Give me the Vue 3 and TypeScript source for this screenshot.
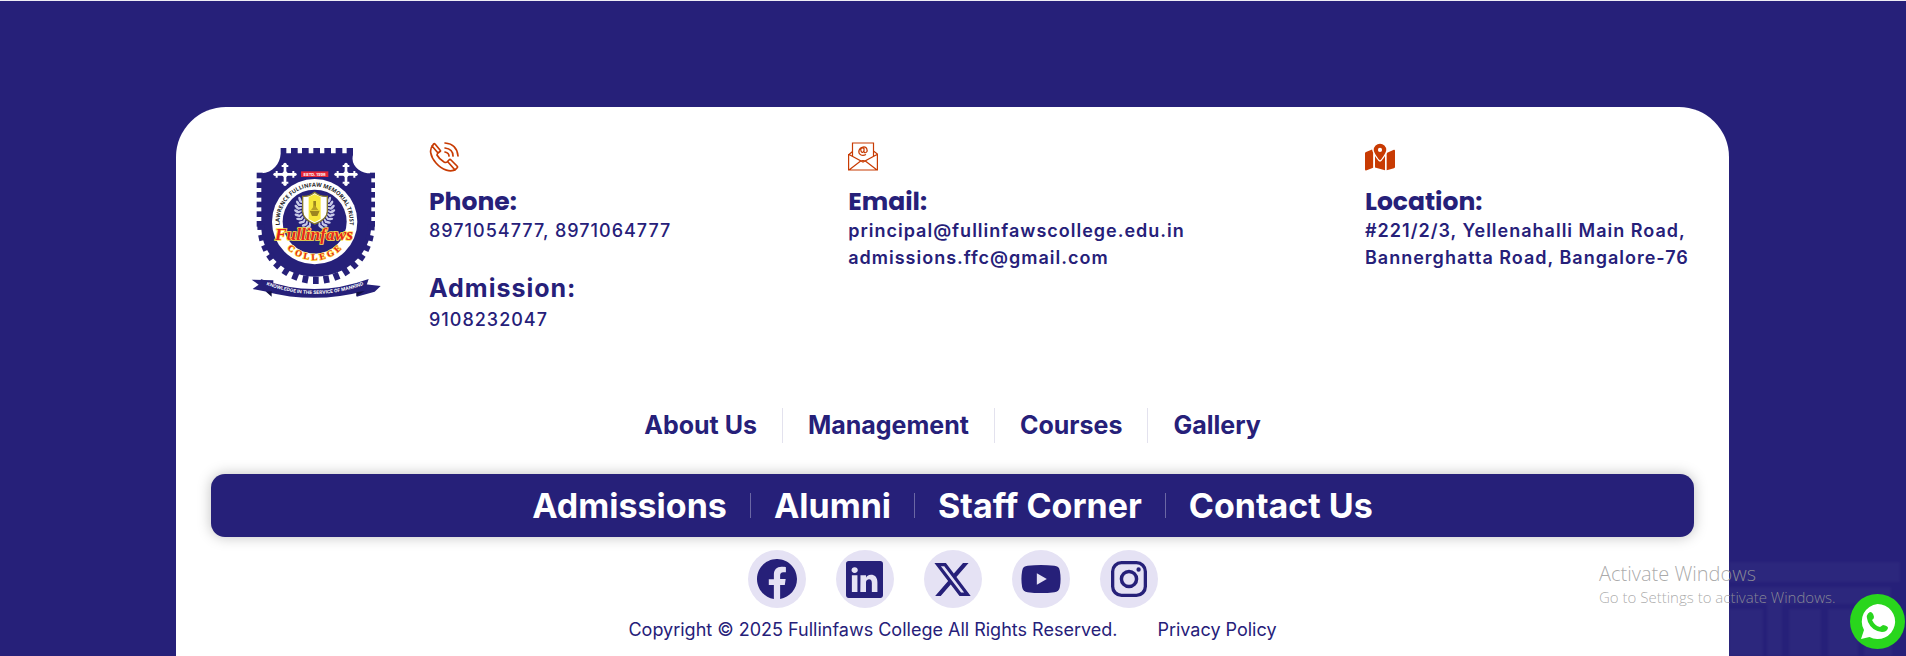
<script setup lang="ts">
interface LinkItem { label: string; href: string }

const links: LinkItem[] = [
  { label: 'About Us', href: '#about' },
  { label: 'Management', href: '#management' },
  { label: 'Courses', href: '#courses' },
  { label: 'Gallery', href: '#gallery' },
]
const featured: LinkItem[] = [
  { label: 'Admissions', href: '#admissions' },
  { label: 'Alumni', href: '#alumni' },
  { label: 'Staff Corner', href: '#staff' },
  { label: 'Contact Us', href: '#contact' },
]
const social = [
  { name: 'Facebook', d: 'M16 8.049c0-4.446-3.582-8.05-8-8.05C3.58 0-.002 3.603-.002 8.05c0 4.017 2.926 7.347 6.75 7.951v-5.625h-2.03V8.05H6.75V6.275c0-2.017 1.195-3.131 3.022-3.131.876 0 1.791.157 1.791.157v1.98h-1.009c-.993 0-1.303.621-1.303 1.258v1.51h2.218l-.354 2.326H9.25V16c3.824-.604 6.75-3.934 6.75-7.951z', box: '0 0 16 16', size: 40 },
  { name: 'LinkedIn', d: 'M0 1.146C0 .513.526 0 1.175 0h13.65C15.474 0 16 .513 16 1.146v13.708c0 .633-.526 1.146-1.175 1.146H1.175C.526 16 0 15.487 0 14.854V1.146zm4.943 12.248V6.169H2.542v7.225h2.401zm-1.2-8.212c.837 0 1.358-.554 1.358-1.248-.015-.709-.52-1.248-1.342-1.248-.822 0-1.359.54-1.359 1.248 0 .694.521 1.248 1.327 1.248h.016zm4.908 8.212V9.359c0-.216.016-.432.08-.586.173-.431.568-.878 1.232-.878.869 0 1.216.662 1.216 1.634v3.865h2.401V9.25c0-2.22-1.184-3.252-2.764-3.252-1.274 0-1.845.7-2.165 1.193v.025h-.016a5.54 5.54 0 0 1 .016-.025V6.169h-2.4c.03.678 0 7.225 0 7.225h2.4z', box: '0 0 16 16', size: 37 },
  { name: 'X', d: 'M18.244 2.25h3.308l-7.227 8.26 8.502 11.24H16.17l-5.214-6.817L4.99 21.75H1.68l7.73-8.835L1.254 2.25H8.08l4.713 6.231zm-1.161 17.52h1.833L7.084 4.126H5.117z', box: '1 2 22 20', size: 37 },
  { name: 'YouTube', d: 'M4 2.6Q12 1.6 20 2.6Q22.8 2.8 23.3 5.5Q24.2 10.5 23.3 15.5Q22.8 18.2 20 18.4Q12 19.4 4 18.4Q1.2 18.2.7 15.5Q-.2 10.5.7 5.5Q1.2 2.8 4 2.6zM9.5 7v7l6-3.5z', box: '0 0 24 21', size: 40 },
  { name: 'Instagram', d: 'M7 0h10a7 7 0 0 1 7 7v10a7 7 0 0 1-7 7H7a7 7 0 0 1-7-7V7a7 7 0 0 1 7-7zm0 2.2A4.8 4.8 0 0 0 2.2 7v10A4.8 4.8 0 0 0 7 21.8h10a4.8 4.8 0 0 0 4.8-4.8V7A4.8 4.8 0 0 0 17 2.2zM12 5.8a6.2 6.2 0 1 1 0 12.4 6.2 6.2 0 0 1 0-12.4zM12 8.1a3.9 3.9 0 1 0 0 7.8 3.9 3.9 0 0 0 0-7.8zM18.4 4.2a1.45 1.45 0 1 1 0 2.9 1.45 1.45 0 0 1 0-2.9z', box: '0 0 24 24', size: 36 },
]

// Crenellations round the lower edge of the crest
const teeth = Array.from({ length: 17 }, (_, i) => 2 + i * 11)
const leaves = Array.from({ length: 9 }, (_, i) => i)
</script>

<template>
  <footer class="page">
    <div class="card">
      <section class="contacts">
        <a class="logo" href="#home" aria-label="Fullinfaws College">
          <svg viewBox="0 0 450 510" aria-hidden="true">
            <defs>
              <path id="ring" d="M122 282A105 105 0 1 1 326 282" />
              <path id="lower" d="M122 310A114 114 0 0 0 328 304" />
              <path id="motto" d="M74 445Q225 503 376 445" />
            </defs>
            <g fill="#262079">
              <path d="M122 36h17v16h14V36h20v16h13V36h20v16h14V36h20v16h13V36h20v16h14V36h20v16h13V36h19v21C330 91 364 113 394 112v155C392 360 312 422 225 422S62 360 64 267V112C99 110 120 83 122 53z" />
              <path v-for="n in 6" :key="'l' + n" :d="`M50 ${81 + n * 29}h18v17h-18z`" />
              <path v-for="n in 6" :key="'r' + n" :d="`M390 ${81 + n * 29}h15v17h-15z`" />
              <rect v-for="a in teeth" :key="a" x="382" y="260" width="22" height="17" :transform="`rotate(${a} 228 268)`" />
            </g>
            <g v-for="x in [135, 318]" :key="x" :transform="`translate(${x} 115)`" fill="#fff">
              <path d="M-4-30h8v26h26v8H4v26h-8V4h-26v-8h26z" />
              <path d="M-10-28h20v6h-20zM-10 22h20v6h-20zM-28-10h6v20h-6zM22-10h6v20h-6zM0-12L12 0 0 12-12 0z" />
              <circle cy="-30" r="5" /><circle cy="30" r="5" /><circle cx="-30" r="5" /><circle cx="30" r="5" />
            </g>
            <rect x="183" y="106" width="82" height="17" fill="#e32537" />
            <text x="224" y="119" class="tiny" text-anchor="middle">ESTD. 1998</text>
            <circle cx="224" cy="257" r="128" fill="#fff" />
            <circle cx="224" cy="257" r="96" fill="#262079" />
            <text class="ringtext"><textPath href="#ring" startOffset="50%" text-anchor="middle">LAWRENCE FULLINFAW MEMORIAL TRUST</textPath></text>
            <g fill="#c8cae8">
              <g v-for="s in [-1, 1]" :key="s" :transform="`translate(224 222) scale(${s} 1)`">
                <g v-for="i in leaves" :key="i" :transform="`rotate(${-35 + i * 13})`">
                  <ellipse cx="54" cy="0" rx="9" ry="4" transform="rotate(-35 54 0)" />
                  <ellipse cx="45" cy="2" rx="7" ry="3" transform="rotate(25 45 2)" />
                </g>
              </g>
            </g>
            <path d="M188 181q20 2 36-12q16 14 38 12v45q0 24-38 38q-36-14-36-38z" fill="#fff" stroke="#887b2b" stroke-width="4" />
            <path d="M206 183l18-8 18 8v66l-18 10-18-10z" fill="#f7e73b" />
            <path d="M220 195h8v18h-8zM209 224h30l-7 16h-16z" fill="#9c8520" />
            <path d="M224 207l11 15h-22z" fill="#b69d26" />
            <text x="222" y="313" text-anchor="middle" class="script">Fullinfaws</text>
            <text class="college"><textPath href="#lower" startOffset="50%" text-anchor="middle">COLLEGE</textPath></text>
            <path d="M35 431l65 2v38l-62-12 18-13zM422 450l-18 17-54 15v-40z" fill="#262079" />
            <path d="M62 429Q223 489 386 429l-12 36Q225 505 78 467z" fill="#262079" />
            <path d="M78 467l17 15v-16zM374 465l-25 16v-12z" fill="#111044" />
            <text class="motto"><textPath href="#motto" startOffset="50%" text-anchor="middle">KNOWLEDGE IN THE SERVICE OF MANKIND</textPath></text>
          </svg>
        </a>
        <div class="columns">
          <div class="column">
            <svg class="icon" viewBox="0 0 30 30" fill="none" stroke="#c83b03" stroke-width="1.700" stroke-linejoin="round" stroke-linecap="round" aria-hidden="true">
              <path d="M4 3C0 7 1 14 7 21S22 31 27 27L28 26Q29 25 28 24L22 18Q21 17 20 18L18 20Q17 21 15 20Q10 17 8 13Q8 12 9 11L11 9.500Q12 9 11 8L6 2Q5 1 4 3M3 4l6 7M19 20l7 8M16 1q12 1 13 13M16 6q8 1 8 8M16 10q4 1 4 4" />
            </svg>
            <h2>Phone:</h2>
            <p>8971054777, 8971064777</p>
            <h3>Admission:</h3>
            <p>9108232047</p>
          </div>
          <div class="column email">
            <svg class="icon" viewBox="0 0 30 30" fill="none" stroke="#c83b03" stroke-width="1.200" aria-hidden="true">
              <path d="M1 12.500L4.500 9.500M.600 12v16h28.800V12l-3.900-3M1 12.500l14 7.500 14-7.500M1 28l11-8.500q3-2 6 0l11 8.500M4.500 14V1h21v13" />
              <path d="M18 12.500c-4 2-8 0-7-4s7-5 8-1c1 3-3 4.500-3 2V6.500c-2-1.500-4 0-3 2.500s3 1 3-1" />
            </svg>
            <h2>Email:</h2>
            <p>principal@fullinfawscollege.edu.in<br />admissions.ffc@gmail.com</p>
          </div>
          <div class="column location">
            <svg class="icon" viewBox="0 0 576 576" fill="#c83b03" aria-hidden="true">
              <path d="M408 152c0 45-69 145-100 184q-20 24-40 0C238 297 168 197 168 152a120 120 0 0 1 240 0zM288 112a40 40 0 1 0 0 80 40 40 0 0 0 0-80zM0 216q0-18 20-25l116-45q5 30 20 62v285L33 542q-33 11-33-20zM192 269c24 38 49 70 65 89q31 36 62 0c16-19 41-51 65-89v275l-192-55zM554 151q22-8 22 22v306q0 18-20 26l-140 37V231l10-26z" />
            </svg>
            <h2>Location:</h2>
            <p>#221/2/3, Yellenahalli Main Road,<br />Bannerghatta Road, Bangalore-76</p>
          </div>
        </div>
      </section>

      <nav class="links" aria-label="College">
        <a v-for="l in links" :key="l.label" :href="l.href">{{ l.label }}</a>
      </nav>
      <nav class="featured" aria-label="Featured">
        <a v-for="l in featured" :key="l.label" :href="l.href">{{ l.label }}</a>
      </nav>
      <div class="social">
        <a v-for="s in social" :key="s.name" href="#social" :aria-label="s.name">
          <svg :viewBox="s.box" :width="s.size" :height="s.size" fill="#262079" fill-rule="evenodd" aria-hidden="true"><path :d="s.d" /></svg>
        </a>
      </div>
      <div class="legal">
        <span>Copyright © 2025 Fullinfaws College All Rights Reserved.</span>
        <a href="#privacy">Privacy Policy</a>
      </div>
    </div>

    <svg class="skyline" viewBox="0 0 177 98" aria-hidden="true">
      <g fill="#fff" fill-opacity=".03">
        <path d="M0 4h171v20H0zM0 29h162v17H0zM0 51h34v47H0zM38 46h15v52H38zM60 51h32v47H60zM99 51h30v47H99zM135 51h28v47h-28z" />
      </g>
    </svg>
    <div class="watermark">
      <strong>Activate Windows</strong>
      <span>Go to Settings to activate Windows.</span>
    </div>
    <a class="whatsapp" href="#whatsapp" aria-label="WhatsApp">
      <svg viewBox="0 0 55 55" aria-hidden="true">
        <circle cx="27.500" cy="27.500" r="27.500" fill="#29d61d" />
        <path d="M27.500 10a17.500 17.500 0 1 1-8 33L11 45l3-9A17.500 17.500 0 0 1 27.500 10z" fill="#fff" />
        <path d="M20 18q3 0 4 5 0 2-2 3 3 6 8 7l3-2q5 1 5 3-1 4-6 4-10-1-14-10-3-8 2-10z" fill="#29d61d" />
      </svg>
    </a>
  </footer>
</template>

<style>
body { margin: 0; background: #262079; }
</style>

<style scoped>
.page {
  position: relative;
  box-sizing: border-box;
  min-height: 100vh;
  padding: 106px 177px 0 176px;
  border-top: 1px solid #eeedf5;
  background: #262079;
  color: #262079;
  font-family: Inter, "Liberation Sans", sans-serif;
  overflow: hidden;
}
a { color: inherit; text-decoration: none; }
svg { display: block; }
.card {
  padding: 35px 35px 13px;
  border-radius: 50px 50px 0 0;
  background: #fff;
}
.contacts { display: flex; min-height: 232px; }
.logo { flex: none; width: 150px; margin: -6px 39px 0 29px; }
.columns { flex: 1; display: flex; justify-content: space-between; }
.icon { width: 30px; height: 30px; margin-bottom: 15px; }
h2 { margin: 0; font-family: Poppins, Inter, sans-serif; font-size: 25px; font-weight: 700; line-height: 30px; }
h3 { margin: 29px 0 3px; font-size: 25px; font-weight: 700; line-height: 30px; letter-spacing: 1px; }
p { margin: 0; font-size: 18px; font-weight: 500; line-height: 27px; letter-spacing: 1px; }
.email { min-width: 340px; }
.location { min-width: 329px; }
.email p, .location p { font-weight: 600; }
.links, .featured { display: flex; justify-content: center; align-items: center; }
.links { height: 35px; margin: 34px 0 31px; font-size: 25px; font-weight: 700; line-height: 35px; }
.links a { padding: 0 25px; }
.links a + a { border-left: 1px solid #e3e2ee; }
.featured {
  height: 63px;
  border-radius: 14px;
  background: #262079;
  color: #fff;
  font-size: 34px;
  font-weight: 700;
  line-height: 25px;
  box-shadow: 0 0 14px rgba(0, 0, 0, .25);
}
.featured a { padding: 0 23px; }
.featured a + a { border-left: 1px solid #6b67a4; }
.social { display: flex; justify-content: center; gap: 30px; margin-top: 13px; }
.social a {
  display: grid;
  place-items: center;
  width: 58px;
  height: 58px;
  border-radius: 50%;
  background: #e5e2f4;
}
.legal { display: flex; justify-content: center; gap: 40px; margin-top: 9px; font-size: 18px; line-height: 26px; }
.tiny { fill: #fff; font-size: 12px; font-weight: 700; }
.ringtext { fill: #222; font-size: 17px; font-weight: 700; font-family: "Liberation Sans Narrow", "Open Sans", sans-serif; }
.script { fill: #e52420; stroke: #ffe34a; stroke-width: 5px; paint-order: stroke; font: italic 700 52px "Liberation Serif", serif; }
.college { fill: #e52420; stroke: #ffe34a; stroke-width: 4px; paint-order: stroke; font: 700 27px "Liberation Serif", serif; letter-spacing: 8px; }
.motto { fill: #fff; font-size: 14px; font-weight: 700; }
.skyline { position: absolute; right: 0; bottom: 0; width: 177px; height: 98px; filter: blur(1px); }
.watermark {
  position: absolute;
  right: 71px;
  bottom: 49px;
  width: 236px;
  color: rgba(155, 155, 155, .85);
  font-family: "Segoe UI", "Open Sans", sans-serif;
  font-weight: 300;
  white-space: nowrap;
  pointer-events: none;
}
.watermark strong, .watermark span { display: block; font-weight: inherit; }
.watermark strong { font-size: 20px; line-height: 26px; }
.watermark span { font-size: 15px; line-height: 20px; }
.whatsapp { position: absolute; right: 1px; bottom: 7px; width: 55px; height: 55px; }
</style>
